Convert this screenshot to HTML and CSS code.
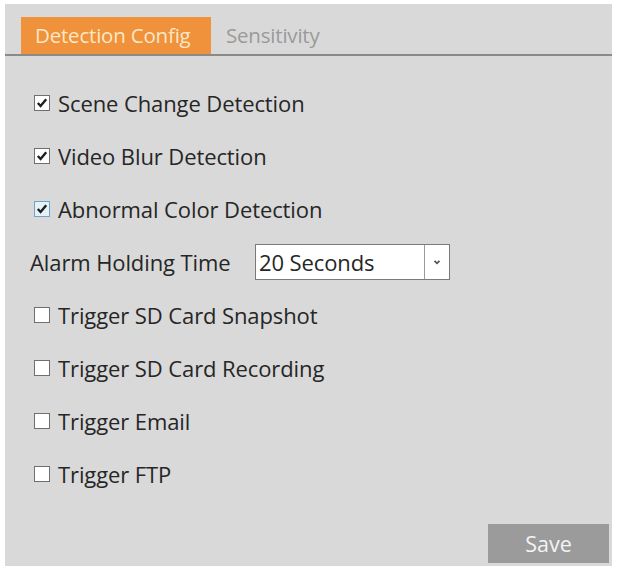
FILE: index.html
```html
<!DOCTYPE html>
<html>
<head>
<meta charset="utf-8">
<link rel="stylesheet" href="styles.css">
</head>
<body>
<div class="panel">
  <div class="tabs">
    <div class="tab active">Detection Config</div>
    <div class="tab">Sensitivity</div>
  </div>
  <div class="content">
    <div class="row"><span class="cb checked"><svg viewBox="0 0 16 16"><path d="M3.2 8 L6.4 11.4 L12.8 3.8" /></svg></span><span class="label">Scene Change Detection</span></div>
    <div class="row"><span class="cb checked"><svg viewBox="0 0 16 16"><path d="M3.2 8 L6.4 11.4 L12.8 3.8" /></svg></span><span class="label">Video Blur Detection</span></div>
    <div class="row"><span class="cb checked focus"><svg viewBox="0 0 16 16"><path d="M3.2 8 L6.4 11.4 L12.8 3.8" /></svg></span><span class="label">Abnormal Color Detection</span></div>
    <div class="row field">
      <span class="flabel">Alarm Holding Time</span>
      <div class="select">
        <span class="value">20 Seconds</span>
        <span class="arrow"><svg viewBox="0 0 10 10"><path d="M2.5 3.8 L5 6.3 L7.5 3.8" /></svg></span>
      </div>
    </div>
    <div class="row"><span class="cb"></span><span class="label">Trigger SD Card Snapshot</span></div>
    <div class="row"><span class="cb"></span><span class="label">Trigger SD Card Recording</span></div>
    <div class="row"><span class="cb"></span><span class="label">Trigger Email</span></div>
    <div class="row"><span class="cb"></span><span class="label">Trigger FTP</span></div>
  </div>
  <div class="footer">
    <button class="save">Save</button>
  </div>
</div>
</body>
</html>
```
FILE: styles.css
```css
html, body {
  margin: 0;
  padding: 0;
  background: #ffffff;
}
body {
  padding: 4px 5px 4px 5px;
  font-family: "Open Sans", "Noto Sans", sans-serif;
  color: #262626;
}
.panel {
  background: #d9d9d9;
  height: 562px;
  width: 607px;
  display: flex;
  flex-direction: column;
  box-sizing: border-box;
}
.tabs {
  display: flex;
  align-items: flex-end;
  padding: 12px 0 0 16px;
  border-bottom: 2px solid #8a8a8a;
  height: 38px;
  box-sizing: content-box;
}
.tab {
  height: 37px;
  padding: 0 15px;
  font-size: 20.5px;
  line-height: 37px;
  color: #9a9a9a;
  letter-spacing: -0.2px;
}
.tab.active {
  background: #f0913b;
  color: #fde7c6;
  width: 190px;
  box-sizing: border-box;
  padding: 0 0 0 14px;
}
.content {
  padding: 20px 0 0 29px;
  display: flex;
  flex-direction: column;
  flex: 1;
}
.row {
  display: flex;
  align-items: center;
  height: 53px;
}
.cb {
  width: 16px;
  height: 16px;
  box-sizing: border-box;
  border: 1px solid #6f6f6f;
  background: #ffffff;
  margin-right: 8px;
  display: inline-flex;
}
.cb svg {
  width: 14px;
  height: 14px;
}
.cb svg path {
  fill: none;
  stroke: #1e1e1e;
  stroke-width: 2.8;
}
.cb.focus {
  border-color: #6fa3c8;
  background: #e5f1f9;
}
.label {
  font-size: 22px;
  color: #262626;
  letter-spacing: -0.1px;
}
.field {
  margin-left: -4px;
}
.flabel {
  font-size: 22px;
  width: 225px;
  letter-spacing: -0.1px;
}
.select {
  width: 195px;
  height: 36px;
  box-sizing: border-box;
  border: 1px solid #7a7a7a;
  background: #ffffff;
  display: flex;
  align-items: stretch;
}
.select .value {
  flex: 1;
  font-size: 22px;
  line-height: 34px;
  padding-left: 3px;
  letter-spacing: -0.1px;
}
.select .arrow {
  width: 24px;
  border-left: 1px solid #9a9a9a;
  display: flex;
  align-items: center;
  justify-content: center;
}
.select .arrow svg {
  width: 10px;
  height: 10px;
}
.select .arrow svg path {
  fill: none;
  stroke: #555555;
  stroke-width: 1.8;
}
.footer {
  display: flex;
  justify-content: flex-end;
  padding: 0 3px 3px 0;
}
.save {
  width: 121px;
  height: 39px;
  background: #9b9b9b;
  border: none;
  color: #f4f4f4;
  font-family: "Open Sans", "Noto Sans", sans-serif;
  font-size: 21.5px;
  padding: 0;
}
```
